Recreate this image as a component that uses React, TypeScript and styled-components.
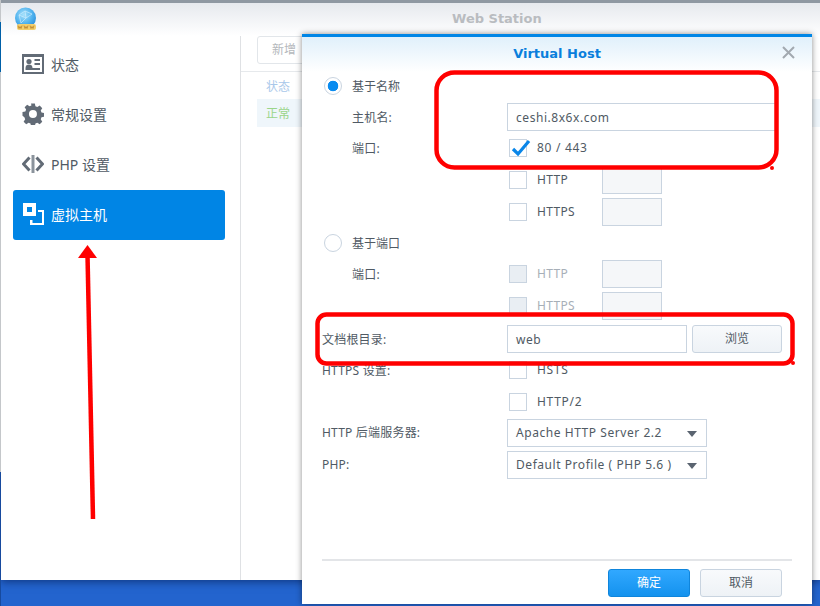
import React from "react";
import styled, { createGlobalStyle } from "styled-components";

const Global = createGlobalStyle`
  html, body { margin: 0; padding: 0; background: #2364ce; }
  body { font-family: "Noto Sans", "Noto Sans CJK SC", sans-serif; font-size: 12px; color: #505a64; }
`;

const Desktop = styled.div`
  position: relative;
  width: 820px;
  height: 606px;
  overflow: hidden;
  background: #2364ce;
  padding-left: 1px;
  box-sizing: border-box;
  &::before {
    content: "";
    position: absolute;
    left: 0;
    top: 0;
    width: 1px;
    height: 606px;
    background: linear-gradient(#c4c7ca 22px, #0060a8 22px, #0060a8 72px, #c4c7ca 72px, #c4c7ca 472px, #174a9e 472px);
  }
`;

const Window = styled.div`
  width: 819px;
  height: 580px;
  background: #fff;
  display: flex;
  flex-direction: column;
  border-top: 3px solid #8f98a2;
  box-sizing: border-box;
  box-shadow: 0 2px 8px rgba(0, 20, 70, 0.55);
`;

const TitleBar = styled.div`
  height: 33px;
  flex: none;
  display: flex;
  align-items: center;
  padding: 0 0 2px 13px;
  box-sizing: border-box;
  background: linear-gradient(#e6e9ee, #ffffff);
`;

const WindowTitle = styled.div`
  margin-left: 414px;
  font: bold 13px "DejaVu Sans", sans-serif;
  color: #b9bcc0;
`;

const Body = styled.div`
  flex: 1;
  display: flex;
  min-height: 0;
`;

const Sidebar = styled.nav`
  width: 239px;
  flex: none;
  box-sizing: content-box;
  padding: 4px 0 0 0;
  border-right: 1px solid #dfe1e4;
`;

const NavList = styled.div`
  padding-left: 12px;
`;

const NavItem = styled.div<{ $active?: boolean }>`
  width: 212px;
  height: 50px;
  box-sizing: border-box;
  padding: 0 0 2px 9px;
  display: flex;
  align-items: center;
  gap: 7px;
  font-size: 14px;
  border-radius: 3px;
  color: ${(p) => (p.$active ? "#ffffff" : "#505a64")};
  background: ${(p) => (p.$active ? "#0085e5" : "transparent")};
`;

const NavIcon = styled.svg`
  width: 22px;
  height: 22px;
  flex: none;
`;

const Content = styled.div`
  flex: 1;
  min-width: 0;
`;

const Toolbar = styled.div`
  height: 36px;
  padding-left: 16px;
  box-sizing: border-box;
  border-bottom: 1px solid #e6e9ec;
`;

const GhostButton = styled.div`
  width: 70px;
  height: 28px;
  box-sizing: border-box;
  border: 1px solid #e2e6ea;
  border-radius: 3px;
  padding-left: 14px;
  line-height: 26px;
  color: #b4b8bc;
  font-size: 12px;
`;

const TableRow = styled.div<{ $tone: "head" | "ok" }>`
  height: ${(p) => (p.$tone === "head" ? 27 : 28)}px;
  margin-left: 16px;
  padding-left: 9px;
  display: flex;
  align-items: center;
  font-size: 12px;
  color: ${(p) => (p.$tone === "head" ? "#a9c8ea" : "#9ad58a")};
  background: ${(p) => (p.$tone === "ok" ? "#eff6fb" : "transparent")};
`;

const Dialog = styled.section`
  position: absolute;
  left: 302px;
  top: 34px;
  width: 510px;
  height: 570px;
  box-sizing: border-box;
  background: #fff;
  border-top: 3px solid #0086e6;
  display: flex;
  flex-direction: column;
  box-shadow: 0 0 6px rgba(0, 0, 0, 0.45);
`;

const DialogHead = styled.header`
  position: relative;
  height: 35px;
  flex: none;
  box-sizing: border-box;
  padding-bottom: 2px;
  display: flex;
  align-items: center;
  justify-content: center;
  background: linear-gradient(#e0f0fb, #ffffff);
  font: bold 13px "DejaVu Sans", sans-serif;
  color: #0a7fdc;
`;

const CloseIcon = styled.svg`
  position: absolute;
  right: 17px;
  top: 9px;
  width: 13px;
  height: 13px;
`;

const Form = styled.div`
  flex: 1;
  padding-left: 20px;
  display: flex;
  flex-direction: column;
`;

const Row = styled.div<{ $top?: number }>`
  height: 28px;
  flex: none;
  margin-top: ${(p) => p.$top ?? 0}px;
  display: grid;
  grid-template-columns: 185px 1fr;
  align-items: center;
`;

const FieldLabel = styled.div<{ $indent?: boolean; $raise?: boolean }>`
  padding-left: ${(p) => (p.$indent ? 30 : 0)}px;
  padding-bottom: ${(p) => (p.$raise ? 2 : 0)}px;
  font-size: 12px;
  letter-spacing: 0.2px;
  color: #505a64;
`;

const RadioLine = styled.div`
  display: flex;
  align-items: center;
  gap: 10px;
  padding-left: 2px;
  font-size: 12px;
`;

const Radio = styled.span<{ $on?: boolean }>`
  width: 18px;
  height: 18px;
  flex: none;
  box-sizing: border-box;
  border-radius: 50%;
  border: 1px solid #c9d4e0;
  background: ${(p) => (p.$on ? "radial-gradient(circle, #0a8cf0 5px, #fff 5.6px)" : "#fff")};
`;

const Controls = styled.div`
  display: flex;
  align-items: center;
`;

const Check = styled.span<{ $disabled?: boolean }>`
  position: relative;
  width: 18px;
  height: 18px;
  flex: none;
  box-sizing: border-box;
  margin-left: 2px;
  border: 1px solid #c9d4e0;
  background: ${(p) => (p.$disabled ? "#e9eef3" : "#fff")};
`;

const CheckMark = styled.svg`
  position: absolute;
  left: 1px;
  top: -1px;
  width: 20px;
  height: 18px;
`;

const CheckText = styled.span<{ $disabled?: boolean; $wide?: boolean }>`
  margin-left: 10px;
  padding-bottom: 2px;
  width: ${(p) => (p.$wide ? "auto" : "65px")};
  font-size: 12px;
  letter-spacing: ${(p) => (p.$wide ? "0.7px" : "0.3px")};
  color: ${(p) => (p.$disabled ? "#a7afb8" : "#505a64")};
`;

const PortBox = styled.div`
  width: 60px;
  height: 28px;
  box-sizing: border-box;
  border: 1px solid #c9d4e0;
  background: #f5f7f9;
`;

const TextField = styled.div<{ $w: number }>`
  width: ${(p) => p.$w}px;
  height: 28px;
  box-sizing: border-box;
  border: 1px solid #c9d4e0;
  padding-left: 8px;
  line-height: 27px;
  font-size: 12px;
  letter-spacing: 0.55px;
  color: #505a64;
  background: #fff;
`;

const SelectField = styled(TextField)`
  position: relative;
  line-height: 25px;
  &::after {
    content: "";
    position: absolute;
    right: 9px;
    top: 11px;
    border-left: 5px solid transparent;
    border-right: 5px solid transparent;
    border-top: 6px solid #5a6470;
  }
`;

const BrowseButton = styled.div`
  margin-left: 5px;
  width: 90px;
  height: 28px;
  box-sizing: border-box;
  border: 1px solid #c9d4e0;
  border-radius: 3px;
  background: linear-gradient(#f8fafc, #eef2f6);
  text-align: center;
  line-height: 26px;
  font-size: 12px;
`;

const Footer = styled.footer`
  flex: none;
  margin: 0 20px;
  height: 45px;
  box-sizing: border-box;
  border-top: 2px solid #e3e5e8;
  padding: 8px 10px 0 0;
  display: flex;
  justify-content: flex-end;
  gap: 10px;
`;

const FooterButton = styled.div<{ $primary?: boolean }>`
  width: 82px;
  height: 28px;
  box-sizing: border-box;
  border-radius: 3px;
  border: 1px solid ${(p) => (p.$primary ? "#0f85dc" : "#c9d4e0")};
  background: ${(p) => (p.$primary ? "linear-gradient(#31a8ff, #1492ee)" : "linear-gradient(#f8fafc, #eef2f6)")};
  color: ${(p) => (p.$primary ? "#fff" : "#505a64")};
  text-align: center;
  line-height: 26px;
  font-size: 12px;
`;

const Annotations = styled.svg`
  position: absolute;
  left: 0;
  top: 0;
  width: 820px;
  height: 606px;
  pointer-events: none;
`;

const Logo = () => (
  <svg width="24" height="24" viewBox="0 0 24 24">
    <defs>
      <radialGradient id="globe" cx="0.42" cy="0.35" r="0.7">
        <stop offset="0" stopColor="#a9e2fb" />
        <stop offset="0.6" stopColor="#4fb2ee" />
        <stop offset="1" stopColor="#2a8bd8" />
      </radialGradient>
    </defs>
    <circle cx="11.5" cy="11" r="10.5" fill="url(#globe)" />
    <path d="M5 8l6-4 7 3-6 4zM11 4l1 7M5 8l2 8M12 11l-5 5" fill="none" stroke="#d8f2ff" strokeWidth="0.6" />
    <rect x="3" y="17" width="19" height="6" rx="2" fill="#f3cf6e" />
    <path d="M4 18.5l1 3 1-2 1 2 1-3M10 18.5l1 3 1-2 1 2 1-3M16 18.5l1 3 1-2 1 2 1-3" fill="none" stroke="#b9812a" strokeWidth="0.8" />
  </svg>
);

const StatusIcon = () => (
  <NavIcon viewBox="0 0 22 22">
    <rect x="1" y="2" width="20" height="18" fill="none" stroke="#626b76" strokeWidth="2" />
    <rect x="0" y="1" width="22" height="3" fill="#626b76" />
    <circle cx="7" cy="8.5" r="2.6" fill="#626b76" />
    <path d="M3.5 15c0-2.5 1.5-3.5 3.5-3.5s3.5 1 3.5 3.5z" fill="#626b76" />
    <path d="M12.5 7h5.5M12.5 11h5.5M3.5 16h14.5" stroke="#626b76" strokeWidth="1.8" />
  </NavIcon>
);

const GearIcon = () => (
  <NavIcon viewBox="0 0 22 22">
    <path
      fill="#626b76"
      fillRule="evenodd"
      d="M9 0h4l.6 3 2 .8 2.5-1.6 2.7 2.7-1.6 2.5.8 2 3 .6v4l-3 .6-.8 2 1.6 2.5-2.7 2.7-2.5-1.6-2 .8-.6 3H9l-.6-3-2-.8-2.5 1.6-2.7-2.7 1.6-2.5-.8-2L0 13V9l3-.6.8-2L2.2 3.9l2.7-2.7 2.5 1.6 2-.8zM11 6.8a4.2 4.2 0 1 0 0 8.4 4.2 4.2 0 0 0 0-8.4z"
      transform="translate(0.5 0.5) scale(0.95)"
    />
  </NavIcon>
);

const CodeIcon = () => (
  <NavIcon viewBox="0 0 22 22">
    <path d="M7.5 4.5L1.5 11l6 6.5" fill="none" stroke="#626b76" strokeWidth="3" />
    <path d="M14.5 4.5l6 6.5-6 6.5" fill="none" stroke="#626b76" strokeWidth="3" />
    <rect x="9.5" y="2" width="3" height="18" fill="#8b939c" />
  </NavIcon>
);

const VhostIcon = () => (
  <NavIcon viewBox="0 0 22 22">
    <path fill="#fff" fillRule="evenodd" d="M1 0h13v13H1zM5 4v5h5V4z" />
    <path fill="#fff" d="M16 7h6v15H8v-5h2.5v3H20V9h-4z" />
  </NavIcon>
);

const Tick = () => (
  <CheckMark viewBox="0 0 20 18">
    <path d="M2 10l5 5L18 2" fill="none" stroke="#0a86e8" strokeWidth="3.2" />
  </CheckMark>
);

export default function App() {
  return (
    <Desktop>
      <Global />
      <Window>
        <TitleBar>
          <Logo />
          <WindowTitle>Web Station</WindowTitle>
        </TitleBar>
        <Body>
          <Sidebar>
            <NavList>
              <NavItem>
                <StatusIcon />
                状态
              </NavItem>
              <NavItem>
                <GearIcon />
                常规设置
              </NavItem>
              <NavItem>
                <CodeIcon />
                PHP 设置
              </NavItem>
              <NavItem $active>
                <VhostIcon />
                虚拟主机
              </NavItem>
            </NavList>
          </Sidebar>
          <Content>
            <Toolbar>
              <GhostButton>新增</GhostButton>
            </Toolbar>
            <TableRow $tone="head">状态</TableRow>
            <TableRow $tone="ok">正常</TableRow>
          </Content>
        </Body>
      </Window>

      <Dialog>
        <DialogHead>
          Virtual Host
          <CloseIcon viewBox="0 0 13 13">
            <path d="M1 1l11 11M12 1L1 12" stroke="#a2a9b0" strokeWidth="2" />
          </CloseIcon>
        </DialogHead>
        <Form>
          <Row>
            <RadioLine>
              <Radio $on />
              基于名称
            </RadioLine>
          </Row>
          <Row $top={3}>
            <FieldLabel $indent>主机名:</FieldLabel>
            <Controls>
              <TextField $w={270}>ceshi.8x6x.com</TextField>
            </Controls>
          </Row>
          <Row $top={3}>
            <FieldLabel $indent>端口:</FieldLabel>
            <Controls>
              <Check>
                <Tick />
              </Check>
              <CheckText $wide>80 / 443</CheckText>
            </Controls>
          </Row>
          <Row $top={4}>
            <span />
            <Controls>
              <Check />
              <CheckText>HTTP</CheckText>
              <PortBox />
            </Controls>
          </Row>
          <Row $top={4}>
            <span />
            <Controls>
              <Check />
              <CheckText>HTTPS</CheckText>
              <PortBox />
            </Controls>
          </Row>
          <Row $top={3}>
            <RadioLine>
              <Radio />
              基于端口
            </RadioLine>
          </Row>
          <Row $top={3}>
            <FieldLabel $indent>端口:</FieldLabel>
            <Controls>
              <Check $disabled />
              <CheckText $disabled>HTTP</CheckText>
              <PortBox />
            </Controls>
          </Row>
          <Row $top={4}>
            <span />
            <Controls>
              <Check $disabled />
              <CheckText $disabled>HTTPS</CheckText>
              <PortBox />
            </Controls>
          </Row>
          <Row $top={5}>
            <FieldLabel>文档根目录:</FieldLabel>
            <Controls>
              <TextField $w={180}>web</TextField>
              <BrowseButton>浏览</BrowseButton>
            </Controls>
          </Row>
          <Row $top={3}>
            <FieldLabel>HTTPS 设置:</FieldLabel>
            <Controls>
              <Check />
              <CheckText $wide>HSTS</CheckText>
            </Controls>
          </Row>
          <Row $top={4}>
            <span />
            <Controls>
              <Check />
              <CheckText $wide>HTTP/2</CheckText>
            </Controls>
          </Row>
          <Row $top={3}>
            <FieldLabel $raise>HTTP 后端服务器:</FieldLabel>
            <Controls>
              <SelectField $w={200}>Apache HTTP Server 2.2</SelectField>
            </Controls>
          </Row>
          <Row $top={4}>
            <FieldLabel $raise>PHP:</FieldLabel>
            <Controls>
              <SelectField $w={200}>Default Profile ( PHP 5.6 )</SelectField>
            </Controls>
          </Row>
        </Form>
        <Footer>
          <FooterButton $primary>确定</FooterButton>
          <FooterButton>取消</FooterButton>
        </Footer>
      </Dialog>

      <Annotations viewBox="0 0 820 606">
        <g fill="none" stroke="#ff0000" strokeWidth="4.5">
          <rect x="436.5" y="72.5" width="340" height="95" rx="18" />
          <rect x="317.5" y="314.5" width="475" height="49" rx="9" />
          <path d="M93 519L87.5 255" />
        </g>
        <path d="M87.5 245l9.5 13H78z" fill="#ff0000" />
        <circle cx="772" cy="168" r="2" fill="#ff0000" />
        <circle cx="793" cy="363" r="2" fill="#ff0000" />
      </Annotations>
    </Desktop>
  );
}
